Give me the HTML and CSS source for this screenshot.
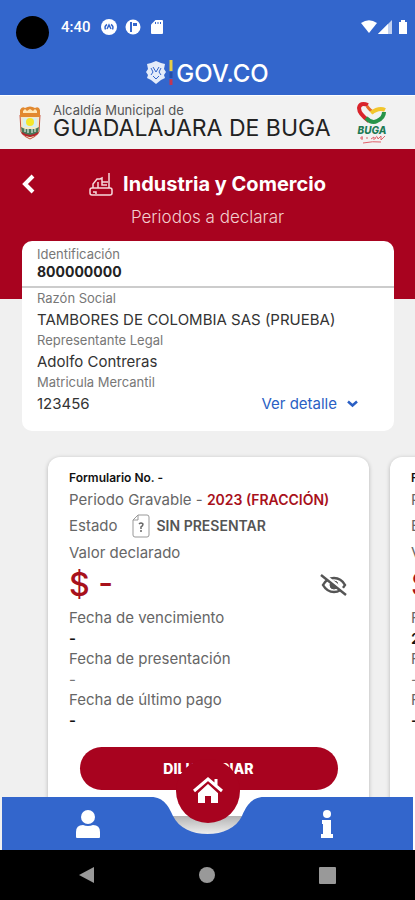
FILE: index.html
```html
<!DOCTYPE html>
<html lang="es">
<head>
<meta charset="UTF-8">
<meta name="viewport" content="width=device-width, initial-scale=1">
<title>Industria y Comercio</title>
<link rel="stylesheet" href="styles.css">
</head>
<body>
	<header class="top">
		<div class="status">
			<span class="camera"></span>
			<span class="clock">4:40</span>
			<svg class="st-app" width="16" height="16" viewBox="0 0 16 16"><circle cx="8" cy="8" r="8" fill="#fff"/><path d="M4.500 10.500A4 4 0 0 1 6 5.500M11.500 10.500A4 4 0 0 0 10 5.500M6 10l2-4 2 4" fill="none" stroke="#3366cc" stroke-width="1.500"/></svg>
			<svg class="st-app" width="16" height="16" viewBox="0 0 16 16"><circle cx="8" cy="8" r="7.500" fill="#fff"/><path d="M5 3h2v10H5zM8 4h4v3H8z" fill="#3366cc"/></svg>
			<svg class="st-app" width="16" height="16" viewBox="0 0 16 16"><path d="M6.500 1H13a1 1 0 0 1 1 1v12a1 1 0 0 1-1 1H3a1 1 0 0 1-1-1V5.500z" fill="#fff"/><path d="M6.500 3v2M9 3v2M11.500 3v2" stroke="#3366cc" stroke-width="1"/></svg>
			<span class="space"></span>
			<svg width="47" height="16" viewBox="0 0 47 16" fill="#fff"><path d="M0 4Q8-1.500 16 4L8 14z"/><path d="M17 15L31 1v14z" fill-opacity=".7"/><path d="M17 15L27 5v10z"/><path d="M40 1h4v2h2v12h-8V3h2z"/></svg>
		</div>
		<div class="gov">
			<svg width="28" height="26" viewBox="0 0 28 26">
				<path d="M1 4l4-1 5-2 5 2 4 1-1 5 2 3-2 3 1 3-4 2-5 4-5-4-4-2 1-3-2-3 2-3z" fill="#e4ecfa"/>
				<path d="M5 8l2 4-2 3M15 8l-2 4 2 3M7 7l3 5 3-5M7 16l3 3 3-3" fill="none" stroke="#3366cc" stroke-width="1"/>
				<path d="M25 0v11" stroke="#e6cf45" stroke-width="3"/><path d="M25 12v6" stroke="#244fa8" stroke-width="3"/><path d="M25 19v6" stroke="#c33652" stroke-width="3"/>
			</svg>
			<span>GOV.CO</span>
		</div>
	</header>

	<div class="entity">
		<svg width="24" height="34" viewBox="0 0 24 34">
			<path d="M2 9h20l-1 17q-3 5-9 7-6-2-9-7z" fill="#f4e9c8" stroke="#c9503c"/>
			<path d="M2 4q2-4 5-2 5-3 10 0 4-2 5 2v7H2z" fill="#e2892f"/>
			<path d="M5 5l2-2 2 2 3-2 3 2 2-2 2 2v2H5z" fill="#ffe7b6"/>
			<path d="M5 12h14v9H5z" fill="#d5edf1"/>
			<circle cx="12" cy="16" r="4" fill="#f5e62a"/>
			<path d="M3 21l4 2h10l4-2-1 6-8 4-8-4z" fill="#49795a"/>
			<path d="M7 23v3M10 23v4M14 23v4M17 23v3" stroke="#fff"/>
			<path d="M4 27q8 6 16 0" fill="none" stroke="#b3252c" stroke-width="2"/>
		</svg>
		<div class="entity-name">
			<small>Alcaldía Municipal de</small>
			<strong>GUADALAJARA DE BUGA</strong>
		</div>
		<svg width="30" height="42" viewBox="0 0 30 42">
			<path d="M12 19Q2 12 2 6 3 0 11 3" fill="none" stroke="#d9232b" stroke-width="4"/>
			<path d="M10 4q3 5 7 6" fill="none" stroke="#e66a25" stroke-width="3"/>
			<path d="M14 11q8-6 14-3" fill="none" stroke="#f2c62c" stroke-width="4"/>
			<path d="M27 10q0 6-7 9-5 3-11-3" fill="none" stroke="#279449" stroke-width="4"/>
			<text x="15" y="32" class="buga">BUGA</text>
			<path d="M3 36h3M5 34v4M9 36h2M14 37l3-2v3M18 37q2-5 3 0l3-3v4l4-4M6 41q10-2 18-1" fill="none" stroke="#e0606a" stroke-width="1"/>
		</svg>
	</div>

	<main>
		<section class="heading">
			<button class="back" type="button" aria-label="Volver"><svg width="14" height="20" viewBox="0 0 14 20"><path d="M11 2L3 10l8 8" fill="none" stroke="#fff" stroke-width="4"/></svg></button>
			<h1>
				<svg width="24" height="24" viewBox="0 0 24 24" fill="none" stroke="#f6d9dc" stroke-width="1.500"><path d="M3 16h18q2 0 2 2v3q0 2-2 2H3q-2 0-2-2v-3q0-2 2-2zM4 16v-4l4-5h3l2-1v4h6M9 10v6M13 10v3h5M20 1v15M4 20h3v2"/></svg>
				Industria y Comercio
			</h1>
			<p>Periodos a declarar</p>
		</section>

		<section class="taxpayer">
			<dl class="ident">
				<dt>Identificación</dt>
				<dd>800000000</dd>
			</dl>
			<dl class="info">
				<dt>Razón Social</dt>
				<dd>TAMBORES DE COLOMBIA SAS (PRUEBA)</dd>
				<dt>Representante Legal</dt>
				<dd>Adolfo Contreras</dd>
				<dt>Matricula Mercantil</dt>
				<dd class="last">123456
					<a href="#detalle">Ver detalle <svg width="11" height="8" viewBox="0 0 11 8"><path d="M1 1.500l4.500 4 4.500-4" fill="none" stroke="#2a5fc4" stroke-width="2.500"/></svg></a>
				</dd>
			</dl>
		</section>

		<section class="periods">
			<article class="form">
				<h2>Formulario No. -</h2>
				<p class="period">Periodo Gravable - <b>2023 (FRACCIÓN)</b></p>
				<p class="state">Estado
					<svg width="18" height="24" viewBox="0 0 18 24" fill="none" stroke="#999"><path d="M6 1h9q2 0 2 2v18q0 2-2 2H3q-2 0-2-2V6zM6 1v5H1"/><path d="M7 10q2-2 4 0 0 2-2 3v2M9 16v2" stroke="#666" stroke-width="1.500"/></svg>
					<b>SIN PRESENTAR</b>
				</p>
				<p class="value">Valor declarado</p>
				<div class="amount">
					<span>$ -</span>
					<button type="button" aria-label="Mostrar valor"><svg width="28" height="22" viewBox="0 0 28 22" fill="none" stroke="#555"><path d="M3 11Q7 4 14 4t11 7q-4 7-11 7T3 11z" stroke-width="2.500"/><circle cx="14" cy="11" r="4" fill="#555"/><path d="M3 0l24 19" stroke="#fff" stroke-width="3"/><path d="M1 1l25 20" stroke-width="2.500"/></svg></button>
				</div>
				<dl>
					<dt>Fecha de vencimiento</dt>
					<dd>-</dd>
					<dt>Fecha de presentación</dt>
					<dd class="soft">-</dd>
					<dt>Fecha de último pago</dt>
					<dd>-</dd>
				</dl>
				<button class="fill" type="button">DILIGENCIAR</button>
			</article>
			<article class="form">
				<h2>Formulario No.</h2>
				<p class="period">Periodo Gravable</p>
				<p class="state">Estado</p>
				<p class="value">Valor declarado</p>
				<div class="amount"><span>$</span></div>
				<dl>
					<dt>Fecha de vencimiento</dt>
					<dd>2023</dd>
					<dt>Fecha de presentación</dt>
					<dd class="soft">-</dd>
					<dt>Fecha de último pago</dt>
					<dd>-</dd>
				</dl>
			</article>
		</section>
	</main>

	<footer>
		<nav class="tabs">
			<a class="tab user" href="#perfil" aria-label="Perfil"><svg width="26" height="28" viewBox="0 0 26 28" fill="#fff"><circle cx="13" cy="7" r="7"/><path d="M1 27v-5q0-7 7-7 5 2 10 0 7 0 7 7v5q0 1-1 1H2q-1 0-1-1z"/></svg></a>
			<svg class="notch" width="127" height="53" viewBox="0 0 127 53">
				<defs><linearGradient id="shade" x1="0" y1="0" x2="0" y2="1"><stop offset="0" stop-color="#b4b4b4"/><stop offset="1" stop-color="#f4f4f4"/></linearGradient></defs>
				<path d="M28 19h71v20H28z" fill="url(#shade)"/>
				<path d="M0 0H7C20 0 25 10 29 19 35 31 48 37 63.500 37S92 31 98 19C102 10 107 0 120 0h7v53H0z" fill="#3366cc"/>
			</svg>
			<a class="tab about" href="#info" aria-label="Información"><svg width="12" height="28" viewBox="0 0 12 28" fill="#fff"><circle cx="6" cy="4" r="4"/><path d="M1 10h9v14h2v4H0v-4h2V14H1z"/></svg></a>
			<a class="home" href="#inicio" aria-label="Inicio"><svg width="32" height="28" viewBox="0 0 32 28"><path d="M6 15l10-9 10 9v11h-7v-7h-6v7H6z" fill="#fff"/><path d="M2 14L16 2l14 12M24 2v7" fill="none" stroke="#fff" stroke-width="3"/><path d="M4 17L16 6l12 11" fill="none" stroke="#a8031f" stroke-width="1.500"/></svg></a>
		</nav>
		<div class="system">
			<button type="button" aria-label="Atrás"><svg width="16" height="18" viewBox="0 0 16 18"><path d="M15 1v16L0 9z" fill="#999"/></svg></button>
			<button type="button" aria-label="Pantalla principal"><svg width="16" height="16" viewBox="0 0 16 16"><circle cx="8" cy="8" r="8" fill="#999"/></svg></button>
			<button type="button" aria-label="Recientes"><svg width="17" height="17" viewBox="0 0 17 17"><rect width="17" height="17" rx="1" fill="#999"/></svg></button>
		</div>
	</footer>
</body>
</html>
```
FILE: styles.css
```css
* {
	box-sizing: border-box;
	margin: 0;
	padding: 0;
}
body {
	height: 100vh;
	overflow: hidden;
	background: #f0f0f0;
	color: #333;
	font-family: Inter, "Open Sans", sans-serif;
	font-size: 13px;
}
svg {
	display: block;
	flex: none;
}
button {
	border: none;
	background: none;
	font-family: inherit;
}
a {
	text-decoration: none;
}

/* status bar and gov.co */
.top {
	height: 95px;
	background: #3366cc;
	color: #fff;
}
.status {
	display: flex;
	align-items: center;
	gap: 8px;
	height: 54px;
	padding: 0 7px 0 16px;
}
.camera {
	width: 33px;
	height: 33px;
	margin: 10px 4px 0 0;
	border-radius: 50%;
	background: #000;
}
.clock {
	margin-right: 2px;
	font-family: Roboto, sans-serif;
	font-size: 15px;
	font-weight: 500;
}
.space {
	flex: 1;
}
.gov {
	display: flex;
	justify-content: center;
	align-items: center;
	gap: 2px;
	height: 38px;
	font-size: 24px;
	font-weight: 500;
}

/* municipality */
.entity {
	display: flex;
	align-items: center;
	height: 54px;
	padding: 0 28px 0 18px;
	border-top: 1px solid #fff;
	background: #f2f2f2;
}
.entity-name {
	flex: 1;
	padding: 0 0 6px 11px;
}
.entity-name small {
	display: block;
	color: #555;
	font-size: 13px;
	line-height: 16px;
}
.entity-name strong {
	display: block;
	color: #222;
	font-size: 23px;
	font-weight: 400;
	line-height: 20px;
	white-space: nowrap;
}
.buga {
	fill: #1d7a55;
	font-size: 10px;
	font-style: italic;
	font-weight: 800;
	text-anchor: middle;
}

/* red heading */
.heading {
	position: relative;
	height: 150px;
	padding-top: 20px;
	background: #a8031f;
	color: #fff;
	text-align: center;
}
.back {
	position: absolute;
	top: 25px;
	left: 22px;
}
.heading h1 {
	display: flex;
	justify-content: center;
	align-items: center;
	gap: 10px;
	font-size: 20px;
	font-weight: 700;
	line-height: 30px;
}
.heading p {
	color: #f3cfd0;
	font-size: 17px;
	font-weight: 300;
	line-height: 36px;
}

/* taxpayer card */
.taxpayer {
	position: relative;
	margin: -58px 21px 22px 22px;
	border-radius: 10px;
	background: #fff;
}
.taxpayer dt {
	color: #777;
	font-size: 13px;
}
.taxpayer dd {
	font-size: 15px;
}
.ident {
	padding: 4px 15px 5px;
	border-bottom: 2px solid #ccc;
	line-height: 18px;
}
.ident dd {
	color: #222;
	font-size: 14px;
	font-weight: 700;
}
.info {
	padding: 0 15px 17px;
	line-height: 21px;
}
.info .last {
	display: flex;
	justify-content: space-between;
	padding-right: 21px;
}
.info a {
	display: flex;
	align-items: center;
	gap: 10px;
	color: #2a5fc4;
}

/* period cards */
.periods {
	display: flex;
	gap: 21px;
	height: 440px;
	padding: 4px 0 0 48px;
	overflow: hidden;
}
.form {
	flex: 0 0 calc(100% - 46px);
	padding: 10px 21px 20px;
	border-radius: 12px;
	background: #fff;
	box-shadow: 0 1px 4px rgba(0, 0, 0, .25);
	color: #666;
	font-size: 15px;
	line-height: 22px;
}
.form h2 {
	color: #111;
	font-size: 12px;
	font-weight: 600;
}
.period b {
	color: #a8111b;
	font-size: 14px;
	font-weight: 600;
}
.state {
	display: flex;
	align-items: center;
	height: 30px;
}
.state svg {
	margin: 0 7px 0 14px;
}
.state b {
	color: #555;
	font-size: 14px;
	font-weight: 600;
}
.value {
	line-height: 24px;
}
.amount {
	display: flex;
	justify-content: space-between;
	align-items: center;
	height: 40px;
	margin-bottom: 2px;
	color: #a8111b;
	font-size: 32px;
	font-weight: 500;
}
.form dd {
	color: #111;
	font-weight: 600;
	line-height: 19px;
}
.form .soft {
	color: #777;
	font-weight: 400;
}
.fill {
	display: block;
	width: calc(100% - 21px);
	height: 43px;
	margin: 17px auto 0;
	border-radius: 22px;
	background: #a8031f;
	color: #fff;
	font-size: 14px;
	font-weight: 800;
}

/* bottom bars */
footer {
	position: fixed;
	right: 0;
	bottom: 0;
	left: 0;
}
.tabs {
	position: relative;
	display: flex;
	margin: 0 2px;
}
.tab {
	display: flex;
	flex: 1;
	justify-content: center;
	align-items: center;
	background: #3366cc;
}
.user {
	padding-left: 30px;
}
.about {
	padding-right: 30px;
}
.home {
	position: absolute;
	top: -38px;
	left: calc(50% - 32px);
	display: flex;
	justify-content: center;
	align-items: center;
	width: 64px;
	height: 64px;
	border-radius: 50%;
	background: #a8031f;
}
.system {
	display: flex;
	justify-content: space-between;
	align-items: center;
	height: 50px;
	padding: 0 19%;
	background: #000;
}
```
